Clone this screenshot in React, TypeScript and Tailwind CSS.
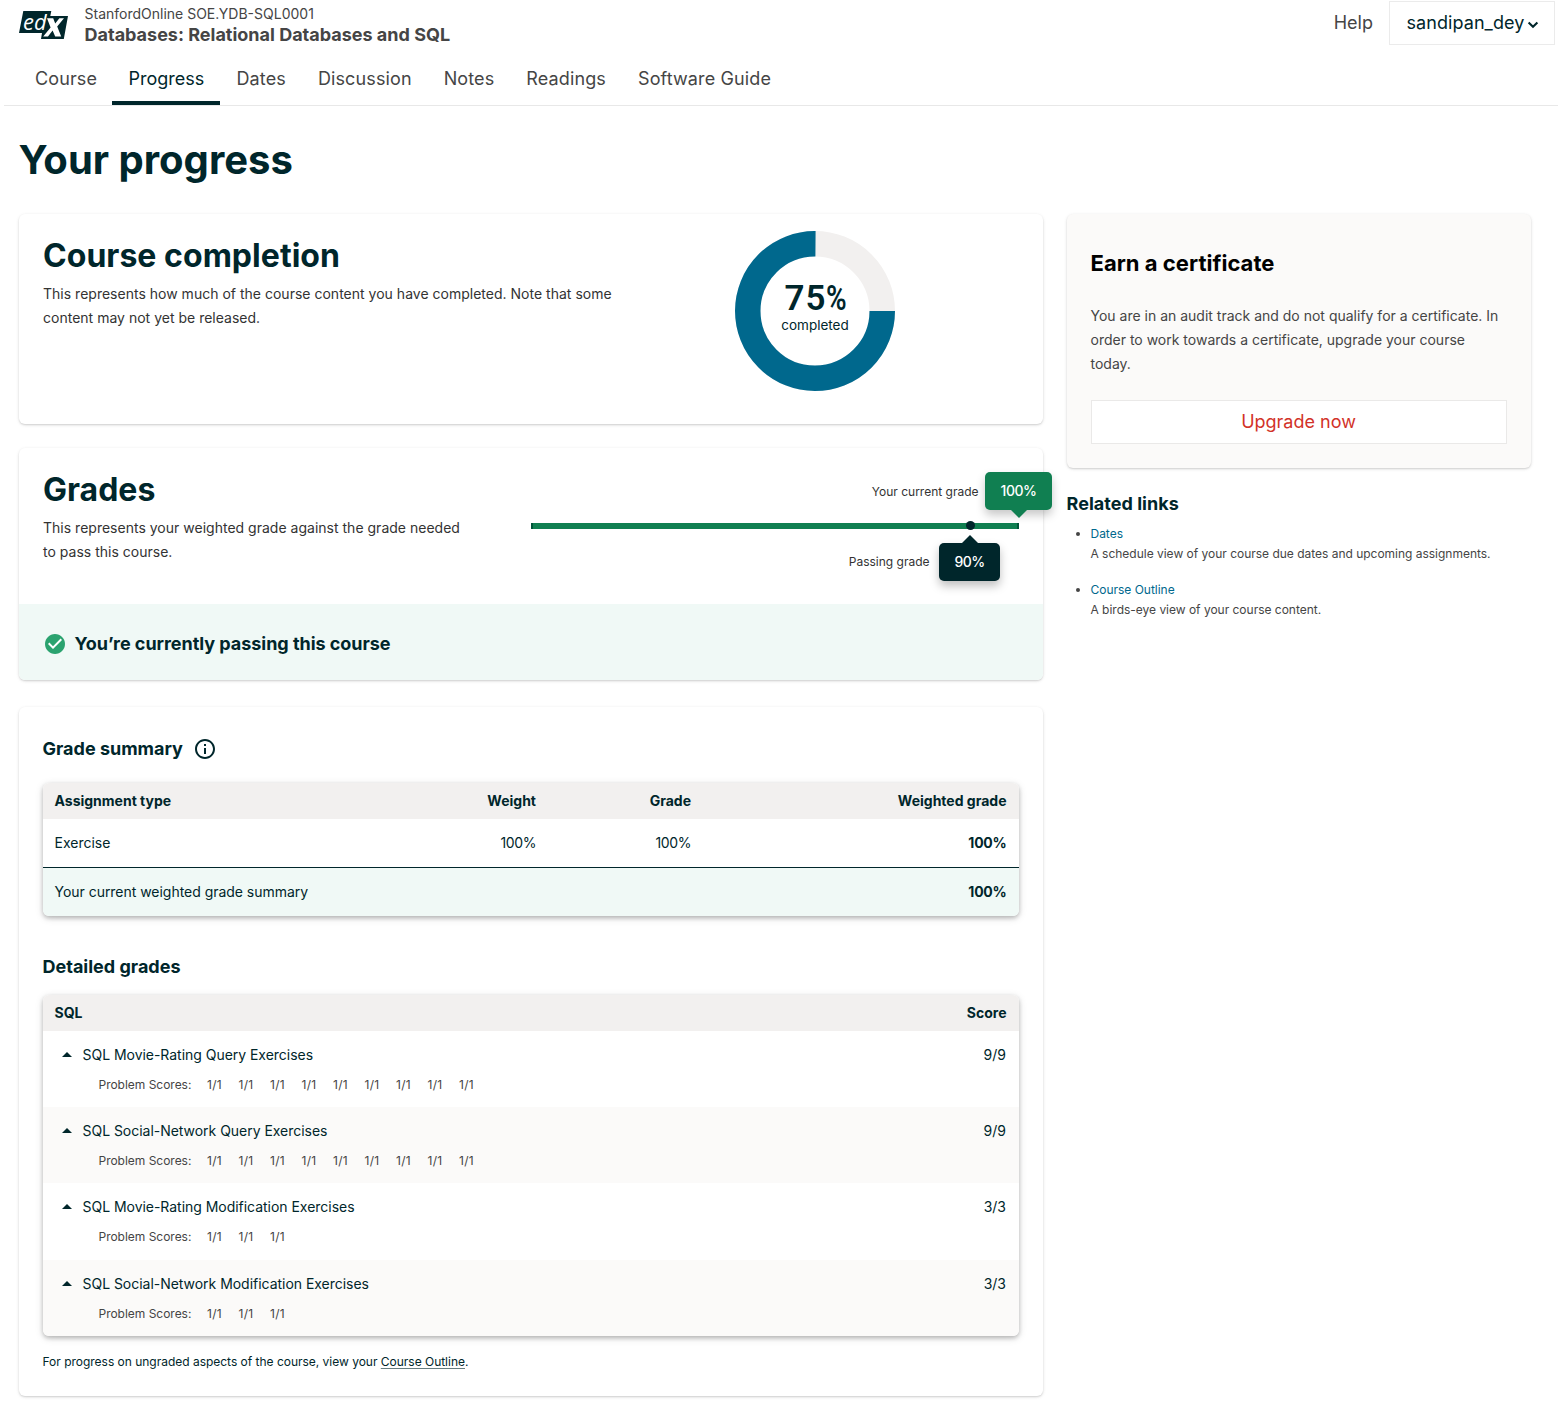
import type { ReactNode } from "react";

const tabs = ["Course", "Progress", "Dates", "Discussion", "Notes", "Readings", "Software Guide"];

const exercises = [
  { name: "SQL Movie-Rating Query Exercises", count: 9 },
  { name: "SQL Social-Network Query Exercises", count: 9 },
  { name: "SQL Movie-Rating Modification Exercises", count: 3 },
  { name: "SQL Social-Network Modification Exercises", count: 3 },
];

function Logo() {
  return (
    <svg width="50" height="30" viewBox="0 0 50 30" className="mt-[10px] block">
      <path d="M4.3 1H32.3L31.3 6H49L44.8 29H22L23 23H0Z" fill="#00262b" />
      <text x="4" y="20" fontFamily="Open Sans" fontStyle="italic" fontSize="22.5" textLength="23.5" lengthAdjust="spacingAndGlyphs" fill="#fff">
        ed
      </text>
      <path d="M28 8.2H34.2L36.2 13.6L40.4 8.2H45L38.2 16.6L42.2 26.6H36.2L33.6 20.6L29 26.6H24.2L31.6 17.4Z" fill="#fff" />
    </svg>
  );
}

function Header() {
  return (
    <header>
      <div className="flex h-[58px] items-start pl-[19px] pr-[3px]">
        <Logo />
        <div className="ml-[15.5px] mt-[4px] grow text-[#454545]">
          <div className="text-sm leading-5">StanfordOnline SOE.YDB-SQL0001</div>
          <div className="text-lg font-bold leading-[21px]">Databases: Relational Databases and SQL</div>
        </div>
        <a className="-mr-px mt-[9px] text-lg text-[#454545]">Help</a>
        <button className="ml-[17px] mt-px flex h-11 w-[166px] items-center border border-[#ebebeb] pl-[16.5px] text-lg tracking-[0.07px] text-[#00262b]">
          sandipan_dey
          <svg width="12" height="8" viewBox="0 0 12 8" className="ml-[2.5px] mt-[3px]" fill="none" stroke="#00262b" strokeWidth="2.1">
            <path d="M1.6 1.4L6 5.7L10.4 1.4" />
          </svg>
        </button>
      </div>
      <nav className="ml-1 flex h-12 border-b border-[#e8e8e8] pl-[15px] text-lg text-[#454545]">
        {tabs.map((tab) => (
          <a
            key={tab}
            className={
              tab === "Progress"
                ? "-ml-[0.6px] w-[108px] border-b-4 border-[#00262b] px-4 pt-[7px] text-[#00262b]"
                : "px-4 pt-[7px] tracking-[0.12px]"
            }
          >
            {tab}
          </a>
        ))}
      </nav>
    </header>
  );
}

function Card({ className, children }: { className: string; children: ReactNode }) {
  return (
    <section className={`rounded-md shadow-[0_1px_2px_rgba(0,0,0,0.15),0_1px_4px_rgba(0,0,0,0.07)] ${className}`}>
      {children}
    </section>
  );
}

function Donut() {
  return (
    <div className="relative ml-[104px] -mt-[7px] size-40">
      <svg width="160" height="160" viewBox="0 0 160 160" fill="none" strokeWidth="25.5" className="block">
        <circle cx="80" cy="80" r="67.25" stroke="#f2f0ef" />
        <path d="M147.25 80A67.25 67.25 0 1 1 80.5 12.75" stroke="#00688d" />
      </svg>
      <div className="absolute inset-0 flex flex-col items-center text-[#00262b]">
        <div className="mt-[48px] flex h-10 w-[61px] items-center font-['Roboto'] text-[35px] font-semibold leading-10">
          <span>7</span>
          <span className="ml-px">5</span>
          <span className="inline-block origin-left scale-x-[0.8]">%</span>
        </div>
        <div className="-mt-1 text-[13.5px] leading-5">completed</div>
      </div>
    </div>
  );
}

function GradeBar() {
  return (
    <div className="relative w-[488px]">
      <div className="absolute right-[40.5px] top-[9.5px] text-xs leading-5 text-[#333]">Your current grade</div>
      <div className="mt-[51px] h-1.5 border-x-2 border-[#00553a] bg-[#107f51]" />
      <div className="absolute left-[434.5px] top-[49px] size-[9px] rounded-full bg-[#00262b]" />
      <div className="absolute left-[454px] top-0 flex h-[38px] w-[67px] items-center justify-center rounded-[5px] bg-[#107f51] text-sm font-medium text-white shadow-[0_5px_10px_rgba(0,0,0,0.22)]">
        <span className="-tracking-[0.5px]">100%</span>
        <i className="absolute left-[26px] top-full border-x-8 border-t-8 border-x-transparent border-t-[#107f51]" />
      </div>
      <div className="absolute right-[89.5px] top-[80px] text-xs leading-5 text-[#333]">Passing grade</div>
      <div className="absolute left-[408px] top-[71px] flex h-[38px] w-[61px] items-center justify-center rounded-[5px] bg-[#00262b] text-sm font-medium text-white shadow-[0_5px_10px_rgba(0,0,0,0.25)]">
        <span className="-tracking-[0.6px]">90%</span>
        <i className="absolute bottom-full left-[23px] border-x-8 border-b-8 border-x-transparent border-b-[#00262b]" />
      </div>
    </div>
  );
}

function ExerciseRow({ name, count, odd }: { name: string; count: number; odd: boolean }) {
  return (
    <div className={odd ? "h-[76px] bg-[#fbfaf9] pt-3" : "h-[76.4px] bg-white pt-3"}>
      <div className="flex h-6 items-center pl-[19px] pr-[13px] text-sm">
        <svg width="10" height="5" viewBox="0 0 10 5" className="-mt-px">
          <path d="M0 5L5 0L10 5Z" fill="#00262b" />
        </svg>
        <span className="ml-[10.5px] grow -tracking-[0.03px]">{name}</span>
        <span>{count}/{count}</span>
      </div>
      <div className="mt-2 flex h-5 items-center gap-4 pl-[55.5px] text-xs text-[#454545]">
        <span className="w-[92.5px] whitespace-nowrap -tracking-[0.02px]">Problem Scores:</span>
        {Array.from({ length: count }, (_, i) => (
          <span key={i} className="w-[15.5px] tracking-[0.3px]">1/1</span>
        ))}
      </div>
    </div>
  );
}

export default function App() {
  return (
    <div className="h-[1404px] w-[1558px] overflow-hidden bg-white font-['Inter',sans-serif] text-[#00262b]">
      <Header />
      <h1 className="ml-[18.5px] mt-[29px] text-[40px] font-bold leading-[50px]">Your progress</h1>
      <main className="ml-[19px] mt-[29px] flex items-start gap-6">
        <div className="w-[1024px]">
          <Card className="flex h-[210px] p-6">
            <div className="w-[588px]">
              <h2 className="text-[32px] font-bold leading-9 tracking-[0.04px]">Course completion</h2>
              <p className="mt-2 text-sm leading-6 tracking-[0.01px] text-[#333]">
                This represents how much of the course content you have completed. Note that some content may not yet be released.
              </p>
            </div>
            <Donut />
          </Card>

          <Card className="mt-6 h-[232px]">
            <div className="flex h-[156px] p-6">
              <div className="w-[488px]">
                <h2 className="text-[32px] font-bold leading-9">Grades</h2>
                <p className="mt-2 w-[430px] text-sm leading-6 tracking-[0.01px] text-[#333]">
                  This represents your weighted grade against the grade needed to pass this course.
                </p>
              </div>
              <GradeBar />
            </div>
            <div className="flex h-[76px] items-center rounded-b-md bg-[#f0f9f6] pl-6 pt-1">
              <svg width="24" height="24" viewBox="0 0 24 24" fill="#2ba36f">
                <path d="M12 2C6.48 2 2 6.48 2 12s4.48 10 10 10 10-4.48 10-10S17.52 2 12 2z" />
                <path d="M10 17l-5-5 1.41-1.41L10 14.17l7.59-7.59L19 8l-9 9z" fill="#fff" />
              </svg>
              <h3 className="ml-[7.5px] text-lg font-bold leading-6 -tracking-[0.04px]">You’re currently passing this course</h3>
            </div>
          </Card>

          <Card className="mt-[27px] h-[689px] px-6 pt-[30px]">
            <div className="flex h-6 items-center">
              <h3 className="-ml-[0.5px] text-lg font-bold leading-6">Grade summary</h3>
              <svg width="24" height="24" viewBox="0 0 24 24" fill="#00262b" className="ml-[10px]">
                <path d="M11 7h2v2h-2zm0 4h2v6h-2zm1-9C6.48 2 2 6.48 2 12s4.48 10 10 10 10-4.48 10-10S17.52 2 12 2zm0 18c-4.41 0-8-3.59-8-8s3.59-8 8-8 8 3.59 8 8-3.59 8-8 8z" />
              </svg>
            </div>
            <div className="mt-[22px] overflow-hidden rounded-md text-sm shadow-[0_2px_4px_rgba(0,0,0,0.22),0_2px_8px_rgba(0,0,0,0.13)]">
              <div className="grid h-9 grid-cols-[328px_153.5px_155px_1fr] items-center bg-[#f2f0ef] pl-[11.5px] pr-[12.5px] font-bold">
                <span>Assignment type</span>
                <span className="text-right">Weight</span>
                <span className="text-right">Grade</span>
                <span className="text-right">Weighted grade</span>
              </div>
              <div className="grid h-12 grid-cols-[328px_153.5px_155px_1fr] items-center bg-white pl-[11.5px] pr-[12.5px]">
                <span>Exercise</span>
                <span className="text-right -tracking-[0.4px]">100%</span>
                <span className="text-right -tracking-[0.4px]">100%</span>
                <span className="text-right font-bold -tracking-[0.25px]">100%</span>
              </div>
              <div className="flex h-[49px] items-center justify-between border-t border-[#00262b] bg-[#f0f9f6] pl-[11.5px] pr-[12.5px]">
                <span className="-tracking-[0.03px]">Your current weighted grade summary</span>
                <span className="font-bold -tracking-[0.25px]">100%</span>
              </div>
            </div>

            <h3 className="-ml-[0.5px] mt-[39px] text-lg font-bold leading-6">Detailed grades</h3>
            <div className="mt-4 overflow-hidden rounded-md shadow-[0_2px_4px_rgba(0,0,0,0.22),0_2px_8px_rgba(0,0,0,0.13)]">
              <div className="flex h-9 items-center justify-between bg-[#f2f0ef] pl-[11.5px] pr-[12.5px] text-sm font-bold">
                <span>SQL</span>
                <span>Score</span>
              </div>
              {exercises.map((e, i) => (
                <ExerciseRow key={e.name} name={e.name} count={e.count} odd={i % 2 === 1} />
              ))}
            </div>
            <p className="-ml-[0.5px] mt-4 text-xs leading-5 -tracking-[0.015px]">
              For progress on ungraded aspects of the course, view your{" "}
              <a className="underline decoration-[#00262b]/60 decoration-1 underline-offset-2">Course Outline</a>.
            </p>
          </Card>
        </div>

        <aside className="w-[464px]">
          <Card className="h-[254px] bg-[#fbfaf9] px-6 pt-[35px]">
            <h2 className="-ml-[0.5px] text-[22px] font-bold leading-7 tracking-[0.03px] text-black">Earn a certificate</h2>
            <p className="-ml-[0.5px] mt-[27px] text-sm leading-6 text-[#454545]">
              You are in an audit track and do not qualify for a certificate. In order to work towards a certificate, upgrade your course today.
            </p>
            <button className="mt-6 h-11 w-full border border-[#eae9e8] bg-white pr-px text-lg text-[#d23228]">Upgrade now</button>
          </Card>
          <h3 className="-ml-[0.5px] mt-6 text-lg font-bold leading-6 tracking-[0.03px]">Related links</h3>
          <ul className="mt-2 list-disc pl-[23.5px] text-xs leading-5 -tracking-[0.015px] text-[#454545]">
            <li>
              <a className="text-[#00688d]">Dates</a>
              <p>A schedule view of your course due dates and upcoming assignments.</p>
            </li>
            <li className="mt-4">
              <a className="text-[#00688d]">Course Outline</a>
              <p>A birds-eye view of your course content.</p>
            </li>
          </ul>
        </aside>
      </main>
    </div>
  );
}
